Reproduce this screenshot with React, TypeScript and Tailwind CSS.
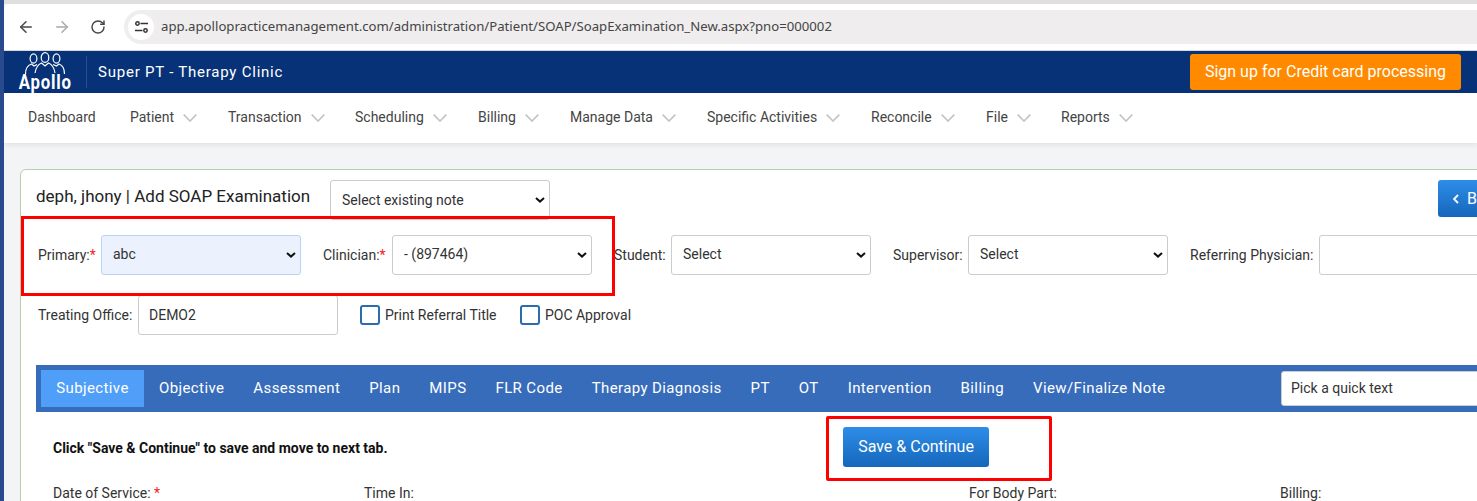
import { ArrowLeft, ArrowRight, RotateCw } from 'lucide-react'

const navItems = [
  { label: 'Dashboard', w: 'w-[102px]', caret: false },
  { label: 'Patient', w: 'w-[98px]', caret: true },
  { label: 'Transaction', w: 'w-[127px]', caret: true },
  { label: 'Scheduling', w: 'w-[123px]', caret: true },
  { label: 'Billing', w: 'w-[92px]', caret: true },
  { label: 'Manage Data', w: 'w-[137px]', caret: true },
  { label: 'Specific Activities', w: 'w-[164px]', caret: true },
  { label: 'Reconcile', w: 'w-[115px]', caret: true },
  { label: 'File', w: 'w-[75px]', caret: true },
  { label: 'Reports', w: 'w-[90px]', caret: true },
]

const tabs = ['Objective', 'Assessment', 'Plan', 'MIPS', 'FLR Code', 'Therapy Diagnosis', 'PT', 'OT', 'Intervention', 'Billing', 'View/Finalize Note']

function Caret() {
  return (
    <svg width="14" height="8" viewBox="0 0 14 8" fill="none" className="ml-[9px] mt-[2px] shrink-0">
      <path d="M0.7 0.7 7 7 13.3 0.7" stroke="#c4c4c4" strokeWidth="1.7" />
    </svg>
  )
}

function Logo() {
  return (
    <div className="w-[56px] h-[42px] flex flex-col items-center">
      <svg width="42" height="23" viewBox="0 0 42 23" fill="none" stroke="white" strokeWidth="1.2" className="shrink-0 mt-[1px]">
        <ellipse cx="9.500" cy="6.500" rx="3.400" ry="4.600" />
        <ellipse cx="21" cy="5.500" rx="3.800" ry="4.900" />
        <ellipse cx="32.500" cy="6.500" rx="3.400" ry="4.600" />
        <path d="M1.500 22c0-6 3-9 6-10l2.500 2 3-1.500" />
        <path d="M11 21c1-6 4-9 6.500-10l3.500 3 3.500-3c2.500 1 5.500 4 6.500 10" />
        <path d="M29 12.500l3.500 1.500 2.500-2c3 1 5.500 4 5.500 10" />
      </svg>
      <span className="font-['Roboto',sans-serif] font-bold text-[21px] leading-[16px] text-white tracking-[1px] scale-x-[0.8] -mt-[1px]">Apollo</span>
    </div>
  )
}

function Select({ value, className = 'w-[200px]', tone = 'bg-white border-[#ccc]' }: { value: string; className?: string; tone?: string }) {
  return (
    <div className={`relative h-[40px] ${className}`}>
      <select defaultValue={value} className={`appearance-none w-full h-full border rounded-[3px] pl-[11px] pb-[2px] text-[14px] text-[#333] ${tone}`}>
        <option>{value}</option>
      </select>
      <svg width="10" height="6" viewBox="0 0 10 6" fill="none" className="absolute right-[5px] top-[17px] pointer-events-none">
        <path d="M1 1 5 4.600 9 1" stroke="#111" strokeWidth="2" />
      </svg>
    </div>
  )
}

function Label({ children, className = '' }: { children: React.ReactNode; className?: string }) {
  return <span className={`text-[14px] text-[#333] whitespace-nowrap ${className}`}>{children}</span>
}

function Check({ label }: { label: string }) {
  return (
    <label className="flex items-center gap-[5px]">
      <span className="w-[20px] h-[20px] rounded-[3px] border-2 border-[#2b6cb0] bg-white" />
      <Label>{label}</Label>
    </label>
  )
}

export default function App() {
  return (
    <div className="relative w-[1477px] h-[501px] overflow-hidden bg-[#f3f4f6] border-l-4 border-[#2a4a8f] font-['Roboto',sans-serif]">
      {/* browser chrome */}
      <div className="h-[4px] bg-[#dfdfdf]" />
      <div className="h-[47px] bg-white flex items-center pl-[13px] border-b border-[#d8d8d8] rounded-tl-[6px]">
        <ArrowLeft size={18} strokeWidth={2} className="text-[#474747]" />
        <ArrowRight size={18} strokeWidth={2} className="text-[#a9a9a9] ml-[18px]" />
        <RotateCw size={16} strokeWidth={2.2} className="text-[#474747] ml-[19px]" />
        <div className="ml-[18px] flex-1 h-[34px] bg-[#efedee] rounded-l-[17px] flex items-center pl-[4px]">
          <div className="w-[26px] h-[26px] bg-white rounded-full flex items-center justify-center">
            <svg width="15" height="12" viewBox="0 0 15 12" fill="none" stroke="#333" strokeWidth="1.500">
              <circle cx="3.500" cy="2.500" r="1.700" />
              <path d="M6.500 2.500H14" />
              <path d="M1 9.500h7.500" />
              <circle cx="11.500" cy="9.500" r="1.700" />
            </svg>
          </div>
          <span className="ml-[7px] font-['Noto_Sans',sans-serif] text-[13.18px] text-[#444] whitespace-nowrap">app.apollopracticemanagement.com/administration/Patient/SOAP/SoapExamination_New.aspx?pno=000002</span>
        </div>
      </div>

      {/* app header */}
      <div className="h-[42px] bg-[#073278] flex items-center pl-[13px] pr-[16px]">
        <Logo />
        <div className="ml-[13px] h-[32px] border-l border-[#2b5090]" />
        <span className="ml-[11px] text-[15px] tracking-[0.77px] text-white">Super PT - Therapy Clinic</span>
        <button className="ml-auto w-[271px] h-[36px] rounded-[3px] bg-[#ff8a00] text-[16px] text-white">Sign up for Credit card processing</button>
      </div>

      {/* main nav */}
      <nav className="h-[50px] bg-white flex items-center pl-[24px] pb-[2px] shadow-[0_2px_5px_rgba(0,0,0,0.08)]">
        {navItems.map(item => (
          <div key={item.label} className={`flex items-center ${item.w} text-[14px] text-[#444]`}>
            {item.label}
            {item.caret && <Caret />}
          </div>
        ))}
      </nav>

      {/* card */}
      <div className="mt-[26px] ml-[16px] w-[1600px] h-[400px] bg-white border border-[#b4d0ac] rounded-[6px] pl-[15px]">
        <div className="flex items-start h-[50px] pt-[10px]">
          <h1 className="text-[17px] text-[#222] w-[294px] mt-[4px] font-normal">deph, jhony | Add SOAP Examination</h1>
          <Select value="Select existing note" className="w-[220px]" tone="bg-white border-[#ccc] pt-[2px]" />
          <button className="ml-[888px] w-[80px] h-[37px] rounded-[3px] bg-gradient-to-b from-[#2e8de8] to-[#1567bb] text-white text-[16px] flex items-center pl-[15px] gap-[8px]">
            <svg width="6" height="10" viewBox="0 0 6 10" fill="none" className="shrink-0">
              <path d="M5 1 1 5 5 9" stroke="white" strokeWidth="1.800" />
            </svg>
            Back
          </button>
        </div>

        <div className="flex items-center mt-[15px] pl-[2px]">
          <Label className="w-[63px]">Primary:<span className="text-[#e22]">*</span></Label>
          <Select value="abc" tone="bg-[#ebf2fe] border-[#b9d3f5]" />
          <Label className="ml-[22px] w-[69px]">Clinician:<span className="text-[#e22]">*</span></Label>
          <Select value="- (897464)" />
          <Label className="ml-[22px] w-[57px]">Student:</Label>
          <Select value="Select" />
          <Label className="ml-[22px] w-[75px]">Supervisor:</Label>
          <Select value="Select" />
          <Label className="ml-[22px] w-[129px]">Referring Physician:</Label>
          <div className="w-[200px] h-[40px] border border-[#ccc] rounded-[3px] bg-white" />
        </div>

        <div className="flex items-center mt-[20px] pl-[2px]">
          <Label className="w-[100px]">Treating Office:</Label>
          <div className="w-[200px] h-[40px] border border-[#ccc] rounded-[3px] bg-white flex items-center pl-[10px] text-[14px] text-[#333]">DEMO2</div>
          <div className="ml-[22px] flex items-center gap-[23.4px]">
            <Check label="Print Referral Title" />
            <Check label="POC Approval" />
          </div>
        </div>

        {/* tabs */}
        <div className="mt-[30px] h-[47px] bg-[#376cbb] flex items-center pl-[5px] text-[15px] tracking-[0.39px] text-white">
          <div className="h-[37px] w-[103px] bg-[#4f9ef8] flex items-center justify-center mr-[15px]">Subjective</div>
          <div className="flex items-center gap-[29px]">
            {tabs.map(t => <span key={t}>{t}</span>)}
          </div>
          <div className="absolute left-[1277px] w-[300px] h-[35px] bg-white rounded-[3px] border border-[#ccc] flex items-center pl-[9px] text-[14px] tracking-normal text-[#333]">Pick a quick text</div>
        </div>

        <div className="flex items-center h-[70px] pl-[17px]">
          <span className="w-[790px] text-[14px] font-bold text-[#111] mt-[2px]">Click "Save & Continue" to save and move to next tab.</span>
          <button className="w-[146px] h-[40px] -mt-[1px] rounded-[3px] bg-gradient-to-b from-[#2e8de8] to-[#1567bb] text-white text-[16px]">Save & Continue</button>
        </div>

        <div className="flex pl-[17px] text-[14px] text-[#333] mt-[1px]">
          <span className="w-[311px]">Date of Service: <span className="text-[#e22]">*</span></span>
          <span className="w-[605px]">Time In:</span>
          <span className="w-[311px]">For Body Part:</span>
          <span>Billing:</span>
        </div>
      </div>

      {/* red annotation boxes drawn over the screenshot */}
      <div className="absolute left-[17px] top-[216px] w-[594px] h-[80px] border-[3px] border-[#ff0000]" />
      <div className="absolute left-[822px] top-[416px] w-[226px] h-[65px] border-[3px] border-[#ff0000] rounded-[2px]" />
    </div>
  )
}
